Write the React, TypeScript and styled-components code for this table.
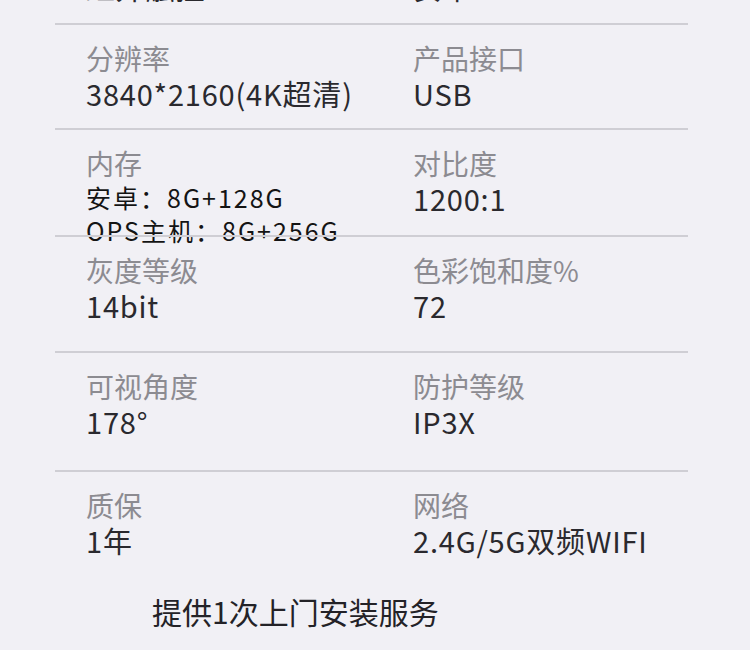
import React from 'react';
import styled, { createGlobalStyle } from 'styled-components';

const GlobalStyle = createGlobalStyle`
  html, body {
    margin: 0;
    padding: 0;
    background: #f1f0f5;
  }
  body {
    width: 750px;
    height: 650px;
    overflow: hidden;
    font-family: 'Noto Sans CJK SC', 'Noto Sans', sans-serif;
  }
`;

interface Spec {
  label: string;
  value: string[];
}

interface RowData {
  height: number;
  left: Spec;
  right: Spec;
}

const rows: RowData[] = [
  { height: 106, left: { label: '触控方式', value: ['红外触控'] }, right: { label: '系统', value: ['安卓'] } },
  { height: 105, left: { label: '分辨率', value: ['3840*2160(4K超清)'] }, right: { label: '产品接口', value: ['USB'] } },
  {
    height: 107,
    left: { label: '内存', value: ['安卓：8G+128G', 'OPS主机：8G+256G'] },
    right: { label: '对比度', value: ['1200:1'] },
  },
  { height: 116, left: { label: '灰度等级', value: ['14bit'] }, right: { label: '色彩饱和度%', value: ['72'] } },
  { height: 119, left: { label: '可视角度', value: ['178°'] }, right: { label: '防护等级', value: ['IP3X'] } },
  { height: 105, left: { label: '质保', value: ['1年'] }, right: { label: '网络', value: ['2.4G/5G双频WIFI'] } },
];

const Page = styled.div`
  width: 750px;
  height: 650px;
  overflow: hidden;
  display: flex;
  flex-direction: column;
`;

const Table = styled.div`
  margin: -83px 62px 0 55px;
  display: flex;
  flex-direction: column;
`;

const Row = styled.div<{ $height: number }>`
  height: ${({ $height }) => $height}px;
  box-sizing: border-box;
  border-top: 2px solid #cfced4;
  display: grid;
  grid-template-columns: 358px 1fr;
  &:first-child {
    border-top-color: transparent;
  }
`;

const Cell = styled.div<{ $first?: boolean }>`
  padding-left: ${({ $first }) => ($first ? 31 : 0)}px;
  padding-top: 16px;
  display: flex;
  flex-direction: column;
  white-space: nowrap;
`;

const Label = styled.div`
  font-size: 28px;
  line-height: 35px;
  color: #8c8b91;
`;

const Value = styled.div`
  font-size: 29px;
  line-height: 35px;
  color: #2a292e;
  letter-spacing: 0.8px;
`;

const MultiValue = styled.div`
  font-size: 25px;
  line-height: 33px;
  color: #141414;
  letter-spacing: 2px;
  &:first-of-type {
    margin-top: -5px;
  }
`;

const Footer = styled.div`
  margin: 16px 0 0 152px;
  font-size: 30px;
  line-height: 40px;
  color: #232227;
`;

const SpecCell: React.FC<{ spec: Spec; first?: boolean }> = ({ spec, first }) => (
  <Cell $first={first}>
    <Label>{spec.label}</Label>
    {spec.value.length > 1
      ? spec.value.map((v) => <MultiValue key={v}>{v}</MultiValue>)
      : <Value>{spec.value[0]}</Value>}
  </Cell>
);

const App: React.FC = () => (
  <>
    <GlobalStyle />
    <Page>
      <Table>
        {rows.map((row, idx) => (
          <Row key={idx} $height={row.height}>
            <SpecCell spec={row.left} first />
            <SpecCell spec={row.right} />
          </Row>
        ))}
      </Table>
      <Footer>提供1次上门安装服务</Footer>
    </Page>
  </>
);

export default App;
